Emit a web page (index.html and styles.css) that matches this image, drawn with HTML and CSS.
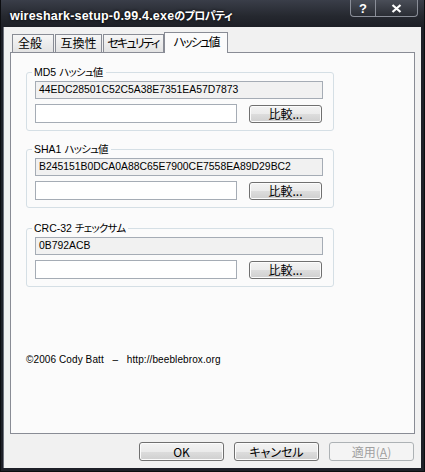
FILE: index.html
```html
<!DOCTYPE html>
<html lang="ja">
<head>
    <meta charset="UTF-8">
    <meta name="viewport" content="width=device-width, initial-scale=1.0">
    <title>wireshark-setup-0.99.4.exeのプロパティ</title>
    <link rel="stylesheet" href="styles.css">
</head>
<body>
    <div class="window">
        <div class="titlebar">
            <span class="title">wireshark-setup-0.99.4.exe<span class="title-ja">のプロパティ</span></span>
            <div class="caption-buttons">
                <span class="caption help">?</span>
                <span class="caption close">
                    <svg width="11" height="9" viewBox="0 0 11 9"><path d="M1.5 1 L9.5 8 M9.5 1 L1.5 8" stroke="#fff" stroke-width="2.2" fill="none"/></svg>
                </span>
            </div>
        </div>

        <div class="client">
            <div class="tabs">
                <span class="tab tab-general">全般</span>
                <span class="tab tab-compat">互換性</span>
                <span class="tab tab-security">セキュリティ</span>
                <span class="tab tab-hash active">ハッシュ値</span>
            </div>

            <div class="panel">
                <fieldset class="group">
                    <legend>MD5 <span class="kana">ハッシュ値</span></legend>
                    <div class="hash">44EDC28501C52C5A38E7351EA57D7873</div>
                    <div class="compare-row">
                        <input type="text" class="compare-input">
                        <button class="btn compare-btn">比較...</button>
                    </div>
                </fieldset>

                <fieldset class="group">
                    <legend>SHA1 <span class="kana">ハッシュ値</span></legend>
                    <div class="hash">B245151B0DCA0A88C65E7900CE7558EA89D29BC2</div>
                    <div class="compare-row">
                        <input type="text" class="compare-input">
                        <button class="btn compare-btn">比較...</button>
                    </div>
                </fieldset>

                <fieldset class="group group-crc">
                    <legend>CRC-32 <span class="kana">チェックサム</span></legend>
                    <div class="hash">0B792ACB</div>
                    <div class="compare-row">
                        <input type="text" class="compare-input">
                        <button class="btn compare-btn">比較...</button>
                    </div>
                </fieldset>

                <p class="credit">©2006 Cody Batt &nbsp;&nbsp;–&nbsp;&nbsp; http://beeblebrox.org</p>
            </div>

            <div class="footer">
                <button class="btn dialog-btn">OK</button>
                <button class="btn dialog-btn">キャンセル</button>
                <button class="btn dialog-btn" disabled>適用(<u>A</u>)</button>
            </div>
        </div>
    </div>
</body>
</html>
```

FILE: styles.css
```css
* {
    margin: 0;
    padding: 0;
    box-sizing: border-box;
}

body {
    font-family: "Liberation Sans", "Noto Sans CJK JP", sans-serif;
    font-size: 11px;
    color: #000000;
    background-color: #ffffff;
}

.window {
    width: 425px;
    height: 472px;
    display: flex;
    flex-direction: column;
    background-color: #1e2028;
    border-left: 1px solid #0c0d10;
    border-right: 1px solid #0c0d10;
    border-bottom: 1px solid #0c0d10;
    padding: 0 3px 3px 2px;
}

.titlebar {
    height: 27px;
    flex-shrink: 0;
    display: flex;
    justify-content: space-between;
    align-items: flex-start;
    background: linear-gradient(#3a3e49, #25282f 60%, #1d1f26);
    margin: 0 -3px 0 -2px;
    padding: 0 6px 0 9px;
}

.title {
    margin-top: 7px;
    font-weight: bold;
    font-size: 12.5px;
    color: #ffffff;
    text-shadow: 0 0 3px #000000;
    letter-spacing: 0.2px;
}

.title-ja {
    font-family: "Noto Sans CJK JP", sans-serif;
    font-size: 11px;
    letter-spacing: -0.6px;
    font-feature-settings: "palt";
}

.caption-buttons {
    display: flex;
}

.caption {
    height: 17px;
    display: flex;
    align-items: center;
    justify-content: center;
    border: 1px solid #8a8e98;
    border-top: none;
    background: linear-gradient(#4a4e58, #2a2d34);
    color: #ffffff;
    font-weight: bold;
    font-size: 13px;
}

.help {
    width: 25px;
    border-bottom-left-radius: 4px;
    border-right: none;
}

.close {
    width: 43px;
    border-bottom-right-radius: 4px;
}

.client {
    flex: 1;
    display: flex;
    flex-direction: column;
    background-color: #f1f1f1;
    border-left: 1px solid #6c707a;
    padding: 6px 6px 0 6px;
}

.tabs {
    display: flex;
    align-items: flex-end;
    height: 19px;
    padding-left: 2px;
    font-family: "Noto Sans CJK JP", sans-serif;
    font-size: 12px;
    font-feature-settings: "palt";
}

.tab {
    height: 18px;
    line-height: 16px;
    text-align: center;
    white-space: nowrap;
    border: 1px solid #898c95;
    border-bottom: none;
    background: linear-gradient(#f6f6f6, #e3e3e3);
    margin-right: 1px;
}

.tab-general {
    width: 42px;
    text-align: left;
    padding-left: 5px;
}

.tab-compat {
    width: 47px;
}

.tab-security {
    width: 61px;
    letter-spacing: -1.8px;
    padding-right: 1px;
}

.tab-hash {
    width: 64px;
    letter-spacing: -1.8px;
}

.tab.active {
    height: 21px;
    line-height: 18px;
    margin-bottom: -1px;
    margin-left: -1px;
    background-color: #fbfbfb;
    background-image: none;
    position: relative;
    z-index: 1;
}

.panel {
    height: 382px;
    display: flex;
    flex-direction: column;
    gap: 11px;
    border: 1px solid #898c95;
    background-color: #fbfbfb;
    padding: 12px 0 0 15px;
}

.group {
    width: 308px;
    border: 1px solid #d5dfe5;
    border-radius: 3px;
    padding: 2px 10px 7px 8px;
}

.group-crc {
    margin-top: 2px;
}

.group legend {
    margin-left: -3px;
    padding: 0 3px 0 2px;
    font-size: 10.5px;
    line-height: 13px;
}

.kana {
    font-family: "Noto Sans CJK JP", sans-serif;
    font-feature-settings: "palt";
    letter-spacing: -0.8px;
}

.hash {
    height: 18px;
    line-height: 16px;
    border: 1px solid #a5acb5;
    background-color: #f1f1f1;
    padding: 0 3px;
    font-size: 10.4px;
    white-space: nowrap;
}

.compare-row {
    display: flex;
    align-items: center;
    justify-content: space-between;
    margin-top: 5px;
}

.compare-input {
    width: 202px;
    height: 19px;
    border: 1px solid #a5acb5;
    background-color: #ffffff;
    outline: none;
}

.btn {
    font-family: "Noto Sans CJK JP", sans-serif;
    font-size: 12px;
    font-feature-settings: "palt";
    color: #000000;
    border: 1px solid #707070;
    border-radius: 3px;
    background: linear-gradient(#f3f3f3, #ebebeb 50%, #dddddd 51%, #cfcfcf);
    box-shadow: inset 0 0 0 1px #fcfcfc;
    cursor: pointer;
}

.compare-btn {
    width: 73px;
    height: 18px;
    line-height: 14px;
    margin-right: 1px;
}

.btn:disabled {
    color: #a0a0a0;
    border-color: #adb2b5;
    background: #f4f4f4;
    box-shadow: none;
    cursor: default;
}

.credit {
    margin-top: 56px;
    font-size: 10px;
    letter-spacing: 0.1px;
}

.footer {
    display: flex;
    justify-content: flex-end;
    gap: 10px;
    padding: 8px 1px 0 0;
}

.dialog-btn {
    width: 85px;
    height: 19px;
    line-height: 15px;
}
```
